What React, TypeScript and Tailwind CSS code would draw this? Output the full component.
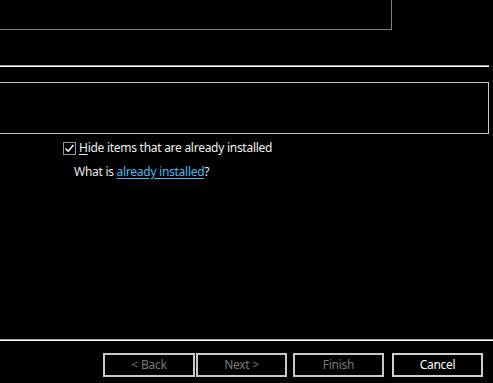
import React from "react";

export default function App() {
  const font = { fontFamily: '"Malgun Gothic", "Noto Sans", "Segoe UI", sans-serif' };
  return (
    <div className="w-[493px] h-[383px] bg-black overflow-hidden flex flex-col text-[12px] tracking-[-0.27px] text-white" style={font}>
      <div className="w-[392px] h-[30px] border-r border-b border-[#808080] shrink-0" />
      <div className="mt-[35px] w-[489px] shrink-0">
        <div className="h-px bg-[#a0a0a0]" />
        <div className="h-px bg-white" />
      </div>
      <div className="mt-[15px] w-[489px] h-[52px] border-t border-r border-b border-[#c8c8c8] shrink-0" />
      <div className="mt-[7px] ml-[63px] flex items-center h-[14px] shrink-0">
        <div className="w-[13px] h-[13px] border border-[#9a9a9a] bg-black flex items-center justify-center">
          <svg width="11" height="11" viewBox="0 0 11 11">
            <path d="M1.5 5.5 L4.2 8.3 L9.5 2" fill="none" stroke="#ffffff" strokeWidth="1.4" />
          </svg>
        </div>
        <span className="ml-[3px] leading-[14px] text-[#f0f0f0]">
          <span className="underline underline-offset-2">H</span>ide items that are already installed
        </span>
      </div>
      <div className="mt-[10px] ml-[74px] h-[14px] leading-[14px] text-[#e8e8e8] shrink-0">
        What is <span className="text-[#4cb9f2] underline underline-offset-2">already installed</span>?
      </div>
      <div className="mt-[160px] w-[493px] shrink-0">
        <div className="h-px bg-[#a0a0a0]" />
        <div className="h-px bg-white" />
      </div>
      <div className="mt-[12px] ml-[103px] flex shrink-0">
        <div className="w-[92px] h-[24px] border-2 border-[#c8c8c8] flex items-center justify-center text-[#7a7a7a]">&lt; Back</div>
        <div className="ml-px w-[91px] h-[24px] border-2 border-[#c8c8c8] flex items-center justify-center text-[#7a7a7a]">Next &gt;</div>
        <div className="ml-[6px] w-[91px] h-[24px] border-2 border-[#c8c8c8] flex items-center justify-center text-[#7a7a7a]">Finish</div>
        <div className="ml-[8px] w-[91px] h-[24px] border-2 border-[#d0d0d0] flex items-center justify-center text-white">Cancel</div>
      </div>
    </div>
  );
}
